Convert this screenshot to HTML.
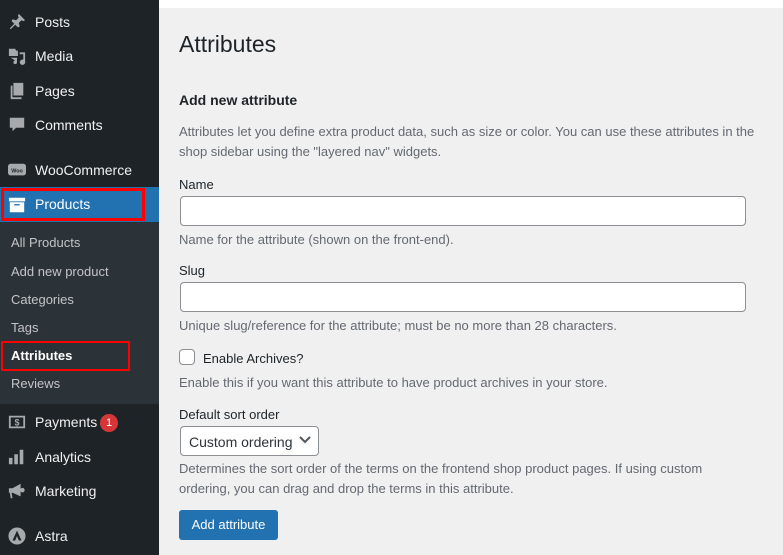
<!DOCTYPE html>
<html><head><style>
*{margin:0;padding:0;box-sizing:border-box}
body{width:783px;height:555px;overflow:hidden;background:#f0f0f1;font-family:"Liberation Sans",sans-serif;position:relative;color:#1d2327}
.sb{position:absolute;left:0;top:0;width:159px;height:555px;background:#1d2327}
.it{position:absolute;left:35px;color:#f0f0f1;font-size:14px}
.ic{position:absolute;left:8px;width:18px;height:18px;fill:#a7aaad}
.sub{position:absolute;left:0;top:222px;width:159px;height:182px;background:#2c3338}
.si{position:absolute;left:11px;color:#c3c4c7;font-size:13px}
.t{position:absolute;left:179px;font-size:13px}
.d{color:#646970}
.inp{position:absolute;left:180px;width:566px;height:30px;background:#fff;border:1px solid #8c8f94;border-radius:4px}
</style></head><body>
<div style="position:absolute;left:159px;top:0;width:624px;height:8px;background:#fff"></div>
<div class="sb"></div>
<svg class="ic" style="top:13px" viewBox="0 0 20 20"><path d="M12 1l7 7-2 1-2-1-3 3 1 4-2 1-3-3-5 5-1-1 5-5-3-3 1-2 4 1 3-3-1-2z"/></svg>
<div class="it" style="top:14px">Posts</div>
<svg class="ic" style="top:47px" viewBox="0 0 20 20"><path d="M1 2h7l1 2h2v6H1z M13 6h6v10a3 3 0 1 1-2-2V8h-4z M3 12h7v5a2 2 0 1 1-2-2z"/></svg>
<div class="it" style="top:48px">Media</div>
<svg class="ic" style="top:82px" viewBox="0 0 20 20"><path d="M6 1h11v14H6z M3 4h2v13h10v2H3z"/></svg>
<div class="it" style="top:83px">Pages</div>
<svg class="ic" style="top:116px" viewBox="0 0 20 20"><path d="M2 2h16v11H9l-4 4v-4H2z"/></svg>
<div class="it" style="top:117px">Comments</div>
<svg class="ic" style="top:161px" viewBox="0 0 20 20"><rect x="0" y="3" width="20" height="13" rx="3"/><text x="10" y="12.5" font-size="6" fill="#1d2327" text-anchor="middle" font-family="Liberation Sans" font-weight="bold">Woo</text></svg>
<div class="it" style="top:162px">WooCommerce</div>
<div style="position:absolute;left:0;top:187px;width:159px;height:35px;background:#2271b1"></div>
<div style="position:absolute;left:151px;top:197px;width:0;height:0;border:8px solid transparent;border-right-color:#f0f0f1"></div>
<div style="position:absolute;left:1px;top:188px;width:144px;height:33px;border:3px solid #f00"></div>
<svg class="ic" style="top:196px;fill:#fff" viewBox="0 0 20 20"><path d="M1 2h18v4H1z M2 7h16v11H2z"/><rect x="7" y="9" width="6" height="1.5" fill="#2271b1"/></svg>
<div class="it" style="top:196px;color:#fff">Products</div>
<div class="sub"></div>
<div class="si" style="top:235px">All Products</div>
<div class="si" style="top:264px">Add new product</div>
<div class="si" style="top:292px">Categories</div>
<div class="si" style="top:320px">Tags</div>
<div class="si" style="top:348px;color:#fff;font-weight:bold">Attributes</div>
<div style="position:absolute;left:1px;top:341px;width:129px;height:30px;border:2px solid #f00"></div>
<div class="si" style="top:376px">Reviews</div>
<svg class="ic" style="top:413px" viewBox="0 0 20 20"><path d="M1 3h18v14H1z M3 5v10h14V5z"/><text x="10" y="14" font-size="10" text-anchor="middle" font-family="Liberation Sans" font-weight="bold">$</text></svg>
<div class="it" style="top:414px">Payments</div>
<div style="position:absolute;left:100px;top:414px;width:18px;height:18px;border-radius:9px;background:#d63638;color:#fff;font-size:11px;text-align:center;line-height:18px">1</div>
<svg class="ic" style="top:448px" viewBox="0 0 20 20"><path d="M1 11h4v7H1z M7 7h4v11H7z M13 2h4v16h-4z"/></svg>
<div class="it" style="top:449px">Analytics</div>
<svg class="ic" style="top:482px" viewBox="0 0 20 20"><path d="M1 7h4l9-5v14l-9-4H4l1 6H3l-1-6H1z"/><circle cx="16" cy="9" r="2.5"/></svg>
<div class="it" style="top:483px">Marketing</div>
<svg class="ic" style="top:527px" viewBox="0 0 20 20"><circle cx="10" cy="10" r="9.5"/><path d="M10 4l5 11h-3l-2-5-2 5H5z" fill="#1d2327"/></svg>
<div class="it" style="top:528px">Astra</div>

<div class="t" style="top:31px;font-size:23px;font-weight:normal">Attributes</div>
<div class="t" style="top:92px;font-size:14px;font-weight:bold">Add new attribute</div>
<div class="t d" style="top:122px;line-height:20px;width:590px">Attributes let you define extra product data, such as size or color. You can use these attributes in the shop sidebar using the "layered nav" widgets.</div>
<div class="t" style="top:177px">Name</div>
<div class="inp" style="top:196px"></div>
<div class="t d" style="top:232px">Name for the attribute (shown on the front-end).</div>
<div class="t" style="top:263px">Slug</div>
<div class="inp" style="top:282px"></div>
<div class="t d" style="top:318px">Unique slug/reference for the attribute; must be no more than 28 characters.</div>
<div style="position:absolute;left:179px;top:349px;width:16px;height:16px;background:#fff;border:1px solid #8c8f94;border-radius:4px"></div>
<div class="t" style="top:351px;left:203px">Enable Archives?</div>
<div class="t d" style="top:375px">Enable this if you want this attribute to have product archives in your store.</div>
<div class="t" style="top:407px">Default sort order</div>
<div style="position:absolute;left:180px;top:426px;width:139px;height:30px;background:#fff;border:1px solid #8c8f94;border-radius:4px;font-size:14px;padding:7px 0 0 8px;color:#2c3338">Custom ordering</div>
<svg style="position:absolute;left:299px;top:436px" width="12" height="8" viewBox="0 0 12 8"><path d="M1 1l5 5 5-5" stroke="#50575e" stroke-width="2" fill="none"/></svg>
<div class="t d" style="top:459px;line-height:20px;width:560px">Determines the sort order of the terms on the frontend shop product pages. If using custom ordering, you can drag and drop the terms in this attribute.</div>
<div style="position:absolute;left:179px;top:510px;width:99px;height:30px;background:#2271b1;border-radius:3px;color:#fff;font-size:13px;text-align:center;line-height:30px">Add attribute</div>
</body></html>
